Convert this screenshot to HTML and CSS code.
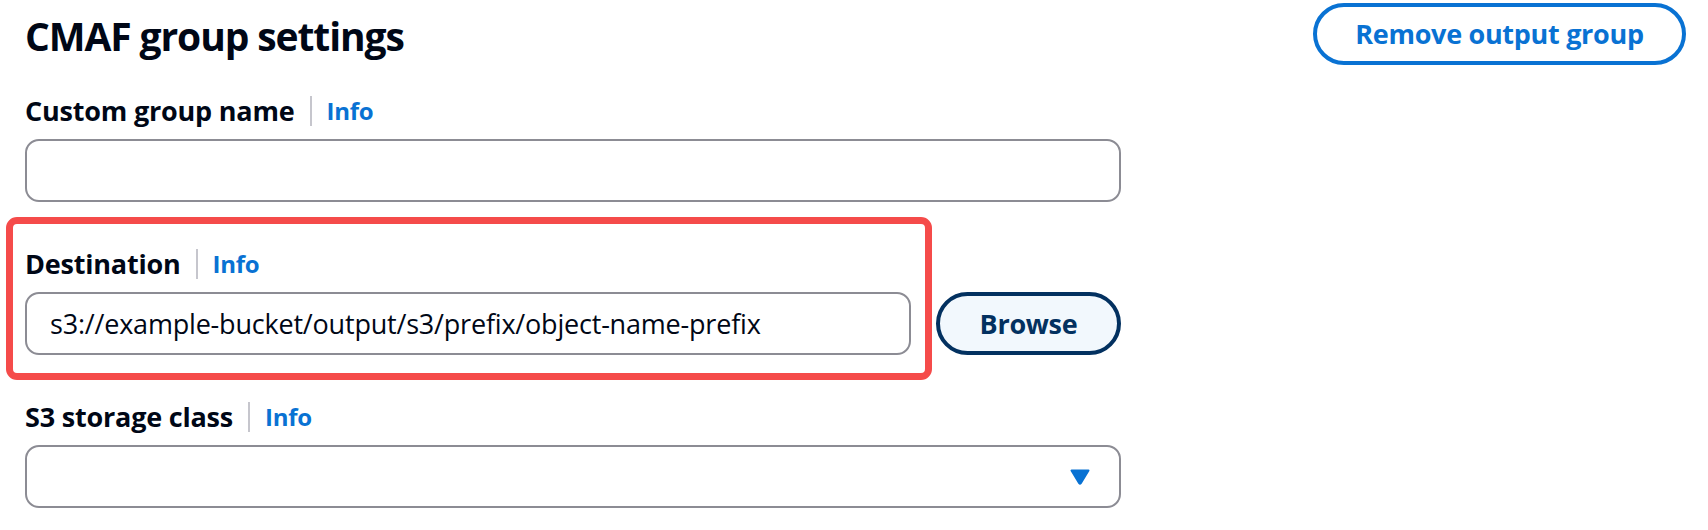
FILE: index.html
```html
<!DOCTYPE html>
<html lang="en">
<head>
<meta charset="utf-8">
<title>CMAF group settings</title>
<link rel="stylesheet" href="styles.css">
</head>
<body>
<div class="page">
  <div class="header">
    <h2 class="title">CMAF group settings</h2>
    <button class="btn btn-outline" type="button">Remove output group</button>
  </div>
  <div class="form">
    <div class="field">
      <div class="label-row"><span class="label">Custom group name</span><span class="divider"></span><a class="info">Info</a></div>
      <div class="control"></div>
    </div>
    <div class="row">
      <div class="field field-grow highlighted">
        <div class="label-row"><span class="label">Destination</span><span class="divider"></span><a class="info">Info</a></div>
        <div class="control"><span class="value">s3://example-bucket/output/s3/prefix/object-name-prefix</span></div>
      </div>
      <button class="btn btn-normal" type="button">Browse</button>
    </div>
    <div class="field">
      <div class="label-row"><span class="label">S3 storage class</span><span class="divider"></span><a class="info">Info</a></div>
      <div class="control select">
        <svg class="caret" width="20" height="16" viewBox="0 0 20 16" aria-hidden="true"><path d="M1.5 1.5 H18.5 L10.8 14.2 Q10 15.3 9.2 14.2 Z" fill="#0972d3" stroke="#0972d3" stroke-width="2" stroke-linejoin="round"/></svg>
      </div>
    </div>
  </div>
</div>
</body>
</html>
```

FILE: styles.css
```css
* { box-sizing: border-box; }
body {
  margin: 0;
  background: #ffffff;
  font-family: "Open Sans", "Noto Sans", Arial, sans-serif;
  color: #000716;
}
.page {
  padding: 3px 22px 0 25px;
}
.header {
  display: flex;
  justify-content: space-between;
  align-items: flex-start;
}
.title {
  margin: 0;
  padding-top: 9px;
  font-size: 39px;
  line-height: 48px;
  font-weight: 700;
  letter-spacing: -1.1px;
  color: #000716;
}
.btn {
  font-family: inherit;
  font-weight: 700;
  font-size: 27px;
  line-height: 36px;
  border-radius: 999px;
  cursor: pointer;
  letter-spacing: -0.3px;
}
.btn-outline {
  height: 62px;
  width: 373px;
  background: #ffffff;
  color: #0972d3;
  border: 4px solid #0972d3;
}
.form {
  width: 1096px;
  margin-top: 24px;
  display: flex;
  flex-direction: column;
  gap: 40px;
}
.field {
  display: flex;
  flex-direction: column;
  gap: 6px;
}
.field-grow { flex: 1; }
.label-row {
  display: flex;
  align-items: center;
  height: 44px;
}
.label {
  font-size: 27px;
  font-weight: 700;
  line-height: 44px;
  letter-spacing: -0.2px;
}
.divider {
  width: 2px;
  height: 30px;
  background: #c6c6cd;
  margin: 0 15px 0 15px;
}
.info {
  font-size: 24px;
  font-weight: 700;
  color: #0972d3;
  line-height: 44px;
  letter-spacing: -0.3px;
}
.control {
  height: 63px;
  border: 2px solid #8c8c94;
  border-radius: 14px;
  background: #ffffff;
  display: flex;
  align-items: center;
  padding: 0 29px 0 23px;
}
.value {
  font-size: 27px;
  color: #000716;
  letter-spacing: -0.2px;
}
.select {
  justify-content: flex-end;
}
.caret { display: block; }
.row {
  display: flex;
  align-items: flex-end;
  gap: 25px;
}
.btn-normal {
  width: 185px;
  height: 63px;
  flex: none;
  background: #f2f8fd;
  color: #033160;
  border: 4px solid #033160;
}
.highlighted { position: relative; }
.highlighted::after {
  content: "";
  position: absolute;
  top: -25px;
  left: -19px;
  right: -21px;
  bottom: -25px;
  border: 7px solid #f54b4a;
  border-radius: 11px;
  pointer-events: none;
}
```
